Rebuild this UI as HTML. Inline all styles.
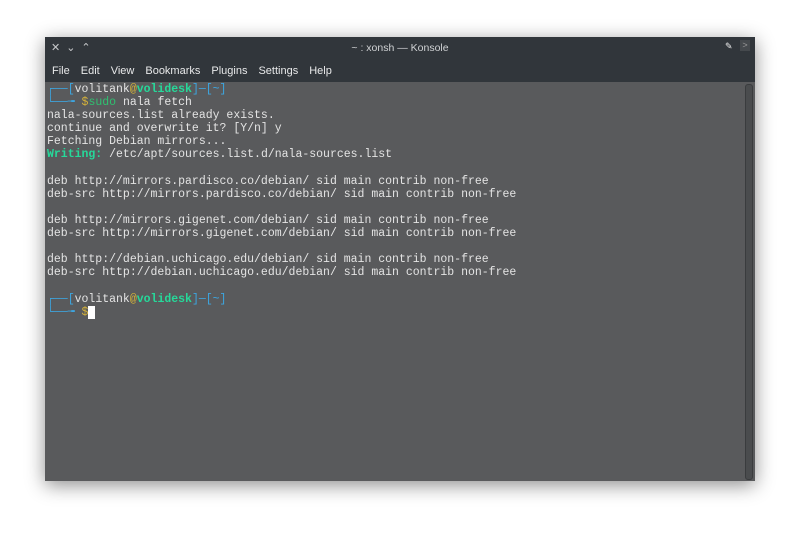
<!DOCTYPE html>
<html><head><style>
body{margin:0;width:800px;height:535px;background:#fff;overflow:hidden;position:relative;font-family:"Liberation Sans",sans-serif}
.win{position:absolute;left:45px;top:37px;width:710px;height:444px;background:#595a5c;box-shadow:0 4px 18px rgba(0,0,0,.45)}
.tb{position:absolute;left:0;top:0;width:710px;height:45px;background:#31363b;color:#dfe1e3;font-size:11px}
.title{position:absolute;top:5px;width:100%;text-align:center;font-size:10.5px;color:#d0d2d4}
.menu{position:absolute;top:28px;left:7px;font-size:11px;color:#e8e9ea;word-spacing:0}
.menu span{margin-right:11px}
.term{position:absolute;left:2px;top:46px;font-family:"Liberation Mono","DejaVu Sans Mono",monospace;font-size:11.5px;line-height:13.1px;color:#e4e4e4;white-space:pre}
.b{color:#3da6e0}.y{color:#d4b23a}.g{color:#26d99a;font-weight:bold}.gs{color:#2fc070}
.sb{position:absolute;left:700px;top:47px;width:6px;height:394px;border:1px solid #3a3c3e;background:#4a4c4e;border-radius:3px}
</style></head><body>
<div class="win">
<div class="tb">
<div style="position:absolute;left:6px;top:4px;font-size:11px;letter-spacing:6px;color:#c8cacc">✕⌄⌃</div>
<div class="title">~ : xonsh — Konsole</div>
<div style="position:absolute;left:680px;top:4px;font-size:9px;color:#eee">✎</div>
<div style="position:absolute;left:695px;top:3px;width:10px;height:11px;background:#45494d;color:#999;font-size:9px;text-align:center">&gt;</div>
<div class="menu"><span>File</span><span>Edit</span><span>View</span><span>Bookmarks</span><span>Plugins</span><span>Settings</span><span>Help</span></div>
</div>
<div class="term"><span class="b">┌──[</span>volitank<span class="y">@</span><span class="g">volidesk</span><span class="b">]─[~]</span>
<span class="b">└──╼ </span><span class="y">$</span><span class="gs">sudo</span> nala fetch
nala-sources.list already exists.
continue and overwrite it? [Y/n] y
Fetching Debian mirrors...
<span class="g">Writing:</span> /etc/apt/sources.list.d/nala-sources.list

deb http://mirrors.pardisco.co/debian/ sid main contrib non-free
deb-src http://mirrors.pardisco.co/debian/ sid main contrib non-free

deb http://mirrors.gigenet.com/debian/ sid main contrib non-free
deb-src http://mirrors.gigenet.com/debian/ sid main contrib non-free

deb http://debian.uchicago.edu/debian/ sid main contrib non-free
deb-src http://debian.uchicago.edu/debian/ sid main contrib non-free

<span class="b">┌──[</span>volitank<span class="y">@</span><span class="g">volidesk</span><span class="b">]─[~]</span>
<span class="b">└──╼ </span><span class="y">$</span><span style="background:#fff"> </span></div>
<div class="sb"></div>
</div>
</body></html>
